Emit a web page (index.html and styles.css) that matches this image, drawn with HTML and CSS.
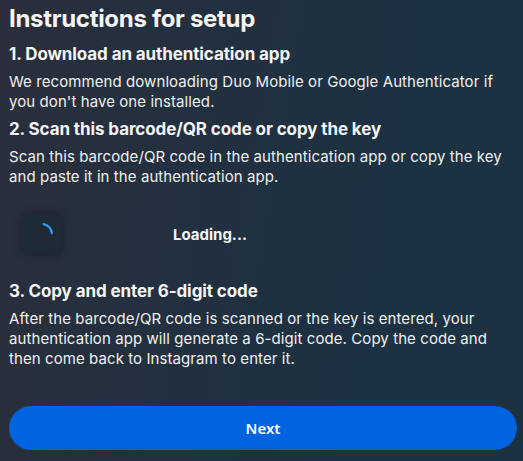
FILE: index.html
```html
<!DOCTYPE html>
<html lang="en">
<head>
<meta charset="utf-8">
<title>Instructions for setup</title>
<link rel="stylesheet" href="styles.css">
</head>
<body>
<main class="page">
  <h1 class="title">Instructions for setup</h1>
  <section class="step">
    <h2 class="step-title">1. Download an authentication app</h2>
    <p class="step-text">We recommend downloading Duo Mobile or Google Authenticator if you don't have one installed.</p>
  </section>
  <section class="step">
    <h2 class="step-title">2. Scan this barcode/QR code or copy the key</h2>
    <p class="step-text">Scan this barcode/QR code in the authentication app or copy the key and paste it in the authentication app.</p>
  </section>
  <div class="loading-row">
    <div class="spinner-box">
      <svg class="spinner" width="40" height="40" viewBox="0 0 40 40">
        <path d="M21.6 10.1 A10 10 0 0 1 29.9 19.2" fill="none" stroke="#3d98ec" stroke-width="2.2" stroke-linecap="round"/>
      </svg>
    </div>
    <span class="loading-text">Loading...</span>
  </div>
  <section class="step">
    <h2 class="step-title">3. Copy and enter 6-digit code</h2>
    <p class="step-text">After the barcode/QR code is scanned or the key is entered, your authentication app will generate a 6-digit code. Copy the code and then come back to Instagram to enter it.</p>
  </section>
  <button class="next-btn" type="button">Next</button>
</main>
</body>
</html>
```

FILE: styles.css
```css
html, body {
  margin: 0;
  padding: 0;
  height: 100%;
}
body {
  background: linear-gradient(100deg, #2b2e3b 0%, #22303f 35%, #1c3142 70%, #1c3142 100%);
  color: #f5f5f5;
  font-family: Inter, "Noto Sans", sans-serif;
  overflow: hidden;
}
.page {
  padding: 4px 6px 0 9px;
  display: flex;
  flex-direction: column;
}
.title {
  margin: 0;
  font-size: 24px;
  line-height: 30px;
  font-weight: 700;
  color: #f5f5f5;
  letter-spacing: -0.3px;
}
.step {
  display: flex;
  flex-direction: column;
  gap: 7px;
}
.title + .step {
  margin-top: 9px;
}
.step + .step {
  margin-top: 6px;
}
.step-title {
  margin: 0;
  font-size: 17px;
  line-height: 22px;
  font-weight: 700;
  color: #f5f5f5;
  letter-spacing: -0.1px;
}
.step-text {
  margin: 0;
  font-size: 15px;
  line-height: 20px;
  font-weight: 400;
  color: #f0f0f0;
  letter-spacing: 0.08px;
}
.loading-row {
  display: flex;
  align-items: center;
  gap: 111px;
  padding-left: 13px;
  margin-top: 27px;
  margin-bottom: 26px;
}
.spinner-box {
  width: 40px;
  height: 40px;
  border-radius: 8px;
  background: #1f2a37;
  box-shadow: 0 0 6px 2px rgba(20, 28, 38, 0.55);
}
.spinner {
  display: block;
}
.loading-text {
  font-size: 15px;
  font-weight: 700;
  color: #f5f5f5;
}
.next-btn {
  margin-top: 37px;
  height: 44px;
  width: 508px;
  border: none;
  border-radius: 22px;
  background: #0064e0;
  color: #ffffff;
  font-family: "Noto Sans", sans-serif;
  font-size: 15px;
  font-weight: 600;
  cursor: pointer;
}
```
